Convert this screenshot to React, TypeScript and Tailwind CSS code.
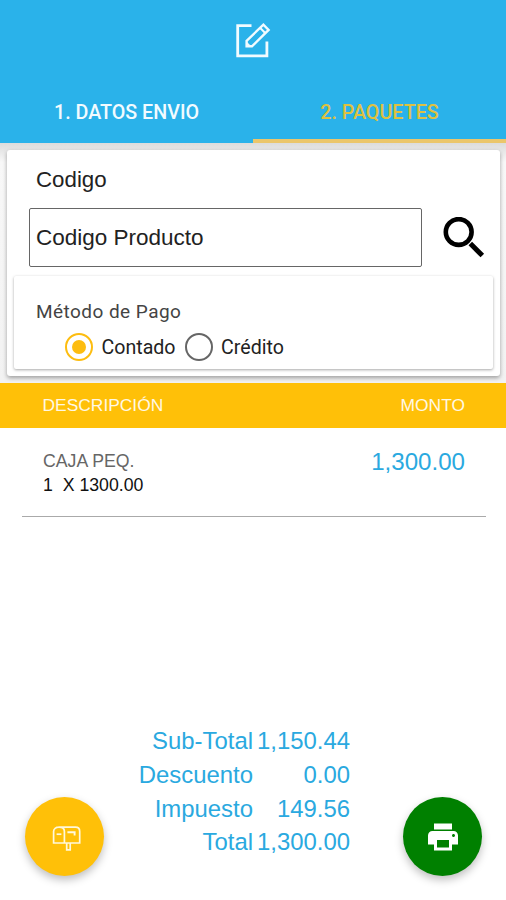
import React from "react";
import { MdPrint } from "react-icons/md";

const totals = [
  { label: "Sub-Total", value: "1,150.44" },
  { label: "Descuento", value: "0.00" },
  { label: "Impuesto", value: "149.56" },
  { label: "Total", value: "1,300.00" },
];

const EditIcon = () => (
  <svg width="40" height="40" viewBox="0 0 40 40" fill="none" stroke="#f2fbff" strokeWidth="2.4">
    <path d="M18.5 6.7H4.7v30.1h29.2V22.5" strokeWidth="2.8" />
    <path d="M13.6 21.8 30.4 5.7l5.2 5.2-16.6 16.4h-5.4z" />
    <path d="m27 8.8 5.4 5.4" strokeWidth="2" />
    <path d="M13 22v5.8h5.8z" fill="#f2fbff" stroke="none" />
  </svg>
);

const SearchIcon = () => (
  <svg width="42" height="42" viewBox="0 0 42 42" fill="none" stroke="#000">
    <circle cx="15.7" cy="15" r="12.9" strokeWidth="4.6" />
    <path d="m27.3 26.6 12 12" strokeWidth="5" />
  </svg>
);

const MailboxIcon = () => (
  <svg width="30" height="28" viewBox="0 0 30 28" fill="none" stroke="#fff8dc" strokeWidth="1.7">
    <path d="M6.5 2.2h17c2.4 0 4.2 1.6 4.2 4.2v11.6H1.6V6.4c0-2.6 2.2-4.2 5.4-4.2s5.4 1.6 5.4 4.2v11.6" />
    <path d="M4.6 9.2h4.8" strokeWidth="1.7" />
    <path d="M15.4 7.3h8.2M22.6 7.3v3.2" strokeWidth="1.9" />
    <path d="M14.7 18v6.8h3.5V18" />
  </svg>
);

const Radio = ({ label, checked }: { label: string; checked?: boolean }) => (
  <div className="flex items-center">
    <span
      className={`flex size-[28px] items-center justify-center rounded-full border-[2.5px] ${
        checked ? "border-[#fdbd10]" : "border-[#666]"
      }`}
    >
      {checked && <span className="size-[14px] rounded-full bg-[#fdbd10]" />}
    </span>
    <span className="ml-[8.5px] pt-[2px] font-['Roboto'] text-[19.6px] leading-[26px] text-[#222]">{label}</span>
  </div>
);

export default function App() {
  return (
    <div className="relative flex h-[900px] w-[506px] flex-col overflow-hidden bg-white font-['Liberation_Sans',sans-serif]">
      <header className="flex h-[143px] shrink-0 flex-col bg-[#2ab2ea]">
        <div className="flex justify-center pt-[19px]">
          <EditIcon />
        </div>
        <nav className="mt-auto grid h-[61px] grid-cols-2 text-center font-['Roboto'] text-[19.7px] leading-[57px] font-medium">
          <div className="pt-[2px] text-[#f2fbff]">1. DATOS ENVIO</div>
          <div className="border-b-4 border-[#ebc66b] pt-[2px] leading-[55px] text-[#dfc140]">
            <span className="relative top-px">2. PAQUETES</span>
          </div>
        </nav>
      </header>

      {/* product form */}
      <section className="h-[240px] shrink-0 bg-linear-to-b from-[#dcdcdc] via-[#f8f8f8] via-8% to-[#f2f2f2] pt-[7px] pr-[6px] pl-[7px]">
        <div className="h-[226px] rounded-[3px] bg-white px-[7px] shadow-[0_2px_4px_rgba(0,0,0,0.35)]">
          <div className="px-[22px] pt-[16px] text-[22.3px] leading-[28px] text-[#222]">Codigo</div>
          <div className="mt-[14px] flex items-center pl-[15px]">
            <div className="flex h-[59px] w-[393px] items-center rounded-[2px] border border-[#666] pl-[6px] text-[22.5px] text-[#222]">
              Codigo Producto
            </div>
            <div className="ml-[21px]">
              <SearchIcon />
            </div>
          </div>
          <div className="mt-[9px] h-[93px] rounded-[2px] bg-white pt-[24px] pl-[22px] shadow-[0_1px_3px_rgba(0,0,0,0.35)]">
            <div className="font-['Roboto'] text-[19px] leading-[24px] tracking-[0.45px] text-[#444]">Método de Pago</div>
            <div className="mt-[9px] flex gap-[9px] pl-[29px]">
              <Radio label="Contado" checked />
              <Radio label="Crédito" />
            </div>
          </div>
        </div>
      </section>

      <div className="flex h-[45px] shrink-0 items-center justify-between bg-[#ffc008] pr-[41px] pl-[42.5px] text-[17.4px] text-[#fff8e4]">
        <span>DESCRIPCIÓN</span>
        <span>MONTO</span>
      </div>

      <div className="mr-[20px] ml-[22px] flex h-[89px] shrink-0 justify-between border-b border-[#aaa] px-[21px] pt-[20px]">
        <div className="pt-px text-[17.7px] leading-[24px]">
          <div className="text-[#666]">CAJA PEQ.</div>
          <div className="whitespace-pre text-[#111]">{"1  X 1300.00"}</div>
        </div>
        <div className="text-[24.1px] leading-[28px] text-[#2aa9e0]">1,300.00</div>
      </div>

      <div className="mt-[207px] grid w-[350px] grid-cols-[253px_97px] text-right text-[23.9px] leading-[33.8px] text-[#2aa9e0]">
        {totals.map((item) => (
          <React.Fragment key={item.label}>
            <span>{item.label}</span>
            <span>{item.value}</span>
          </React.Fragment>
        ))}
      </div>

      {/* floating buttons */}
      <button className="absolute bottom-[24px] left-[25px] flex size-[79px] items-center justify-center rounded-full bg-[#ffc008] pt-[4px] pl-[4px] shadow-[0_4px_8px_rgba(0,0,0,0.25)]">
        <MailboxIcon />
      </button>
      <button className="absolute right-[24px] bottom-[24px] flex size-[79px] items-center justify-center rounded-full bg-[#008000] shadow-[0_4px_8px_rgba(0,0,0,0.25)]">
        <MdPrint size={36} color="#fff" />
      </button>
    </div>
  );
}
